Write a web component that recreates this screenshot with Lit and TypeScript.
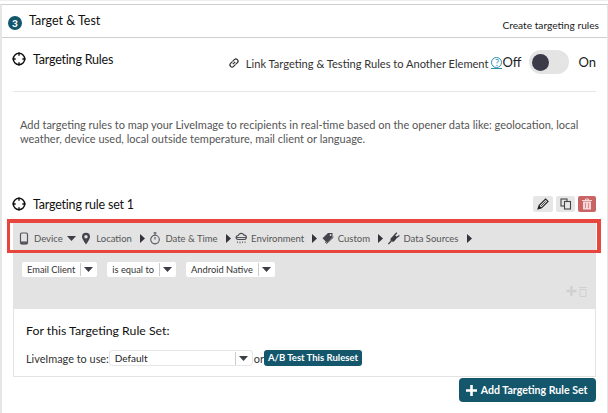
import { LitElement, html, css, svg } from 'lit';
import { customElement } from 'lit/decorators.js';

const target = html`<svg class="target" viewBox="0 0 14 14" width="14" height="14">
  <circle cx="7" cy="7" r="5.7" fill="none" stroke="#111" stroke-width="1.5"/>
  <path d="M7 .5v3.2M7 10.3v3.2M.5 7h3.2M10.3 7h3.2" stroke="#111" stroke-width="1.4"/>
</svg>`;

const caret = html`<svg class="caret" viewBox="0 0 9 5" width="9" height="5"><path d="M0 0h9L4.5 5z" fill="#3d3d46"/></svg>`;
const arrow = html`<svg class="arrow" viewBox="0 0 5 9" width="5" height="9"><path d="M0 0l5 4.5L0 9z" fill="#33333b"/></svg>`;

const ico: Record<string, unknown> = {
  device: svg`<rect x="2.5" y="1" width="7" height="11" rx="1.2" fill="none" stroke="#55555f" stroke-width="1.2"/><path d="M2.5 9.6h7v1.6a1 1 0 0 1-1 1h-5a1 1 0 0 1-1-1z" fill="#55555f"/>`,
  location: svg`<path d="M6 .8a4 4 0 0 0-4 4c0 2.6 4 7.6 4 7.6s4-5 4-7.6a4 4 0 0 0-4-4z" fill="#44444c"/><circle cx="6" cy="4.8" r="1.7" fill="#e3e3e3"/>`,
  time: svg`<circle cx="6" cy="7.6" r="4.3" fill="none" stroke="#55555f" stroke-width="1.1"/><path d="M6 7.6V5M4.6.9h2.8M6 1v2" stroke="#55555f" stroke-width="1.1" fill="none"/>`,
  environment: svg`<path d="M3 7.5a2 2 0 0 1 .3-4 3 3 0 0 1 5.6-.4 2.2 2.2 0 0 1 .6 4.4z" fill="none" stroke="#4a4a52" stroke-width="1.1"/><path d="M.8 5.6h10.4" stroke="#4a4a52" stroke-width="1"/><path d="M2.5 9.5v1.5M5 9.5v2M7.5 9.5v1.5M10 9.5v1.5" stroke="#6a6a72" stroke-width="1"/>`,
  custom: svg`<path d="M.5 6.2L6 1h4.5v4.2L5 10.8z" fill="#44444c"/><path d="M3 9.8l1.8 1.6L11.5 5" fill="none" stroke="#44444c" stroke-width="1"/><circle cx="8.6" cy="3" r=".9" fill="#e3e3e3"/>`,
  plug: svg`<path d="M2.6 6.4L6.4 2.6l3 3L6 9.4a2.4 2.4 0 0 1-3.4-3z" fill="#3c3c44"/><path d="M6.4 3.4L8.8.7M8.6 5.6L11.4 3.4M3.4 8.8L.4 12" stroke="#3c3c44" stroke-width="1.3" fill="none"/>`,
};

const menu: [string, string, boolean][] = [
  ['device', 'Device', true],
  ['location', 'Location', false],
  ['time', 'Date & Time', false],
  ['environment', 'Environment', false],
  ['custom', 'Custom', false],
  ['plug', 'Data Sources', false],
];

@customElement('app-root')
export class AppRoot extends LitElement {
  static styles = css`
    :host {
      display: block;
      position: relative;
      width: 608px;
      height: 413px;
      overflow: hidden;
      background: #fff;
      font-family: Lato, 'Noto Sans', sans-serif;
      color: #333;
    }

    .strip {
      height: 1px;
      background: #eee;
    }

    .card {
      box-sizing: border-box;
      height: 409px;
      margin-top: 3px;
      border-top: 1px solid #cfcfcf;
      border-left: 2px solid #e6e6e6;
      border-right: 1px solid #e6e6e6;
    }

    .step {
      display: flex;
      justify-content: space-between;
      height: 32px;
      border-bottom: 1px solid #cfcfcf;
      padding: 0 8px 0 6px;
    }

    .step-title {
      display: flex;
      gap: 7px;
      font-size: 12.5px;
      color: #111;
      line-height: 14px;
      padding-top: 9px;
    }

    .badge {
      width: 14px;
      height: 14px;
      margin-top: 2px;
      border-radius: 50%;
      background: #14566b;
      color: #fff;
      font-size: 10px;
      font-weight: 900;
      line-height: 14px;
      text-align: center;
    }

    .step-note {
      font-size: 10.2px;
      line-height: 13px;
      padding-top: 14px;
      color: #222;
    }

    .body {
      padding: 0 11px;
    }

    .rules-head {
      display: flex;
      justify-content: space-between;
      height: 53px;
      border-bottom: 1px solid #e6e6e6;
    }

    .heading {
      display: flex;
      align-items: center;
      gap: 7px;
      margin-left: -1px;
      font-size: 12.5px;
      letter-spacing: -0.2px;
      color: #111;
      height: 18px;
      margin-top: 12px;
    }

    .heading svg { flex: none; }

    .link-row {
      display: flex;
      align-items: center;
      height: 24px;
      margin-top: 12px;
      font-size: 11.1px;
      color: #333;
    }

    .link-row .chain {
      margin: 2px 6px 0 0;
    }

    .link-text { margin-top: 2px; }

    .help {
      margin: 2px 0 0 3px;
      border-bottom: 1px solid #2b8fb0;
    }

    .help-dot {
      display: block;
      box-sizing: border-box;
      width: 11px;
      height: 11px;
      font-size: 9px;
      line-height: 9px;
      text-align: center;
      color: #2b8fb0;
      border: 1px solid #2b8fb0;
      border-radius: 50%;
    }

    .off-on {
      font-size: 13px;
      color: #222;
    }

    .toggle {
      display: flex;
      align-items: center;
      box-sizing: border-box;
      width: 40px;
      height: 24px;
      margin: 0 9px 0 8px;
      padding-left: 3px;
      border-radius: 12px;
      background: #e4e4e4;
    }

    .knob {
      width: 17px;
      height: 17px;
      border-radius: 50%;
      background: #3a3a48;
    }

    .intro {
      margin: 26px 0 0;
      padding-left: 7px;
      height: 77px;
      font-size: 11px;
      line-height: 14px;
      color: #555;
    }

    .set-head {
      display: flex;
      justify-content: space-between;
      align-items: center;
      height: 18px;
    }

    .set-head .heading { margin-top: 0; }

    .tools {
      display: flex;
      gap: 3px;
    }

    .tool {
      display: flex;
      align-items: center;
      justify-content: center;
      width: 20px;
      height: 16px;
      border-radius: 2px;
      background: #e6e6e6;
    }

    .tool.copy { width: 19px; }

    .tool.del {
      width: 18px;
      background: #c96464;
    }

    .panel {
      margin-top: 9px;
      background: #e3e3e3;
      height: 87px;
    }

    .menu {
      display: flex;
      align-items: center;
      height: 32px;
      padding-left: 5px;
      font-size: 9.5px;
      color: #555;
    }

    .menu-item {
      display: flex;
      align-items: center;
      gap: 4px;
      margin-right: 4.5px;
    }

    .menu-item .arrow { margin-left: 4px; }

    .conds {
      display: flex;
      gap: 10px;
      padding: 8px 0 0 9px;
    }

    .select {
      display: flex;
      align-items: center;
      height: 15px;
      background: #fff;
      border-radius: 2px;
      padding-left: 5px;
      font-size: 9.3px;
      color: #333;
    }

    .select .divider {
      width: 1px;
      height: 13px;
      margin: 0 3px 0 5px;
      background: #ccc;
    }

    .select .caret { margin-right: 4px; }

    .mini {
      display: flex;
      justify-content: flex-end;
      gap: 2px;
      padding: 9px 9px 0 0;
    }

    .box {
      box-sizing: border-box;
      height: 68px;
      padding: 14px 12px 0;
      border: 1px solid #e3e3e3;
      border-top: none;
    }

    .box h3 {
      margin: 0;
      font-size: 12.3px;
      font-weight: 400;
      line-height: 16px;
      color: #111;
    }

    .use {
      display: flex;
      align-items: center;
      margin-top: 11px;
      font-size: 10.9px;
      color: #333;
    }

    .wide {
      box-sizing: border-box;
      width: 144px;
      height: 16px;
      margin: 0 1px 0 0;
      border: 1px solid #e6e6e6;
      border-radius: 3px;
      font-size: 10px;
      color: #222;
    }

    .wide span { margin-right: auto; }

    .ab {
      height: 16px;
      padding: 0 4px;
      border-radius: 3px;
      background: #14566b;
      color: #fff;
      font-size: 9.5px;
      font-weight: 700;
      line-height: 15px;
    }

    .actions {
      display: flex;
      justify-content: flex-end;
      margin-top: 1px;
    }

    .add {
      display: flex;
      align-items: center;
      gap: 4px;
      height: 24px;
      padding: 0 8.5px 0 7px;
      border-radius: 4px;
      background: #14566b;
      color: #fff;
      font-size: 10.6px;
      font-weight: 700;
    }

    .highlight {
      position: absolute;
      left: 7px;
      top: 219px;
      width: 594px;
      height: 34px;
      box-sizing: border-box;
      border: solid #e8453f;
      border-width: 4px 4px 3px 3px;
    }
  `;

  render() {
    return html`
      <div class="strip"></div>
      <div class="card">
        <div class="step">
          <div class="step-title"><span class="badge">3</span>Target &amp; Test</div>
          <div class="step-note">Create targeting rules</div>
        </div>
        <div class="body">
          <div class="rules-head">
            <div class="heading">${target}Targeting Rules</div>
            <div class="link-row">
              <svg class="chain" viewBox="0 0 12 12" width="12" height="12">
                <path d="M4.8 7.2l2.4-2.4M4.6 4.4L6.4 2.6a2 2 0 0 1 3 3L7.6 7.4M7.4 7.6L5.6 9.4a2 2 0 0 1-3-3l1.8-1.8" fill="none" stroke="#333" stroke-width="1.2"/>
              </svg>
              <span class="link-text">Link Targeting &amp; Testing Rules to Another Element</span>
              <span class="help"><span class="help-dot">?</span></span>
              <span class="off-on">Off</span>
              <div class="toggle"><div class="knob"></div></div>
              <span class="off-on">On</span>
            </div>
          </div>
          <p class="intro">
            Add targeting rules to map your LiveImage to recipients in real-time based on the opener data like: geolocation, local
            weather, device used, local outside temperature, mail client or language.
          </p>
          <div class="set-head">
            <div class="heading">${target}Targeting rule set 1</div>
            <div class="tools">
              <div class="tool">
                <svg viewBox="0 0 12 12" width="12" height="12"><path d="M1 11l1.2-3.6L8.6 1 11 3.4 4.6 9.8z" fill="none" stroke="#222" stroke-width="1.1"/><path d="M4 8l4.6-4.6" stroke="#222" stroke-width=".8"/><path d="M1 11l1.2-3.6 2.4 2.4z" fill="#222"/></svg>
              </div>
              <div class="tool copy">
                <svg viewBox="0 0 12 12" width="12" height="12"><rect x="1" y="1" width="6" height="7" fill="none" stroke="#444" stroke-width="1.1"/><rect x="4.5" y="3.5" width="6" height="7.5" fill="#e6e6e6" stroke="#444" stroke-width="1.1"/></svg>
              </div>
              <div class="tool del">
                <svg viewBox="0 0 12 12" width="12" height="12"><path d="M1 2.5h10M4.5 2.5V1h3v1.5" stroke="#f6d6d6" fill="none"/><path d="M2 3.5h8V11.5H2z" fill="#f6d6d6"/><path d="M4.5 5v5M7.5 5v5" stroke="#d98a8a"/></svg>
              </div>
            </div>
          </div>
          <div class="panel">
            <div class="menu">
              ${menu.map(([icon, label, down]) => html`
                <div class="menu-item">
                  <svg viewBox="0 0 12 13" width="12" height="13">${ico[icon]}</svg>
                  ${label}
                  ${down ? caret : arrow}
                </div>`)}
            </div>
            <div class="conds">
              <div class="select">Email Client<i class="divider"></i>${caret}</div>
              <div class="select">is equal to<i class="divider"></i>${caret}</div>
              <div class="select">Android Native<i class="divider"></i>${caret}</div>
            </div>
            <div class="mini">
              <svg viewBox="0 0 11 10" width="11" height="10"><path d="M5.5 0v10M.5 5h10" stroke="#d0d0d0" stroke-width="2.4"/></svg>
              <svg viewBox="0 0 8 11" width="8" height="11"><path d="M0 1.5h8M1 3.5h6V10.5H1z" fill="none" stroke="#d0d0d0"/></svg>
            </div>
          </div>
          <div class="box">
            <h3>For this Targeting Rule Set:</h3>
            <div class="use">
              LiveImage to use:
              <div class="select wide"><span>Default</span><i class="divider"></i>${caret}</div>
              <span>or</span>
              <div class="ab">A/B Test This Ruleset</div>
            </div>
          </div>
          <div class="actions">
            <div class="add">
              <svg viewBox="0 0 11 11" width="11" height="11"><path d="M5.5 0v11M0 5.5h11" stroke="#fff" stroke-width="2.6"/></svg>
              Add Targeting Rule Set
            </div>
          </div>
        </div>
      </div>
      <div class="highlight"></div>
    `;
  }
}
